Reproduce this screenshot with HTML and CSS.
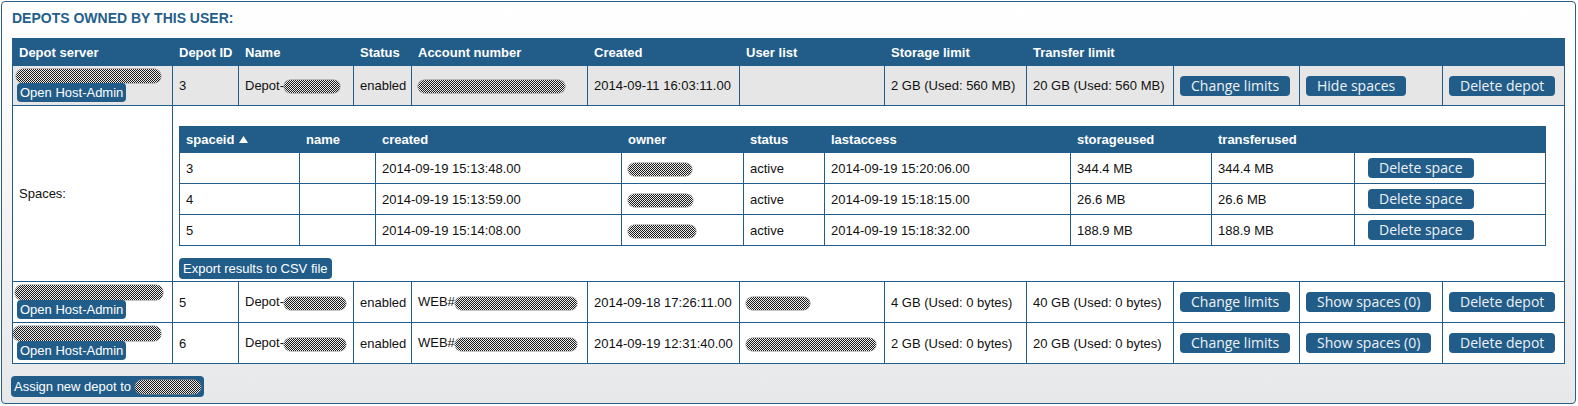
FILE: index.html
```html
<!DOCTYPE html>
<html>
<head>
<meta charset="utf-8">
<title>Depots</title>
<link rel="stylesheet" href="styles.css">
</head>
<body>
<div class="panel">
  <h2 class="title">DEPOTS OWNED BY THIS USER:</h2>
  <table class="depots">
    <colgroup>
      <col class="c-srv"><col class="c-id"><col class="c-name"><col class="c-status"><col class="c-acc"><col class="c-created"><col class="c-users"><col class="c-stor"><col class="c-trans"><col class="c-b1"><col class="c-b2"><col class="c-b3">
    </colgroup>
    <thead>
      <tr><th>Depot server</th><th>Depot ID</th><th>Name</th><th>Status</th><th>Account number</th><th>Created</th><th>User list</th><th>Storage limit</th><th>Transfer limit</th><th></th><th></th><th></th></tr>
    </thead>
    <tbody>
      <tr class="hl">
        <td class="srv"><span class="blob blob-srv w145"></span><span class="lbtn host">Open Host-Admin</span></td>
        <td>3</td>
        <td>Depot-<span class="blob w56"></span></td>
        <td>enabled</td>
        <td><span class="blob w147"></span></td>
        <td>2014-09-11 16:03:11.00</td>
        <td></td>
        <td>2 GB (Used: 560 MB)</td>
        <td>20 GB (Used: 560 MB)</td>
        <td><span class="btn">Change limits</span></td>
        <td><span class="btn">Hide spaces</span></td>
        <td><span class="btn">Delete depot</span></td>
      </tr>
      <tr class="spaces-row">
        <td class="spaces-label">Spaces:</td>
        <td colspan="11" class="spaces-cell">
          <table class="spaces">
            <colgroup>
              <col class="s-id"><col class="s-name"><col class="s-created"><col class="s-owner"><col class="s-status"><col class="s-last"><col class="s-stor"><col class="s-trans"><col class="s-btn">
            </colgroup>
            <thead>
              <tr><th>spaceid <svg class="sort" width="9" height="7" viewBox="0 0 9 7"><polygon points="4.5,0 9,7 0,7" fill="#ffffff"/></svg></th><th>name</th><th>created</th><th>owner</th><th>status</th><th>lastaccess</th><th>storageused</th><th>transferused</th><th></th></tr>
            </thead>
            <tbody>
              <tr><td>3</td><td></td><td>2014-09-19 15:13:48.00</td><td><span class="blob w64"></span></td><td>active</td><td>2014-09-19 15:20:06.00</td><td>344.4 MB</td><td>344.4 MB</td><td><span class="btn del-space">Delete space</span></td></tr>
              <tr><td>4</td><td></td><td>2014-09-19 15:13:59.00</td><td><span class="blob w65"></span></td><td>active</td><td>2014-09-19 15:18:15.00</td><td>26.6 MB</td><td>26.6 MB</td><td><span class="btn del-space">Delete space</span></td></tr>
              <tr><td>5</td><td></td><td>2014-09-19 15:14:08.00</td><td><span class="blob w68"></span></td><td>active</td><td>2014-09-19 15:18:32.00</td><td>188.9 MB</td><td>188.9 MB</td><td><span class="btn del-space">Delete space</span></td></tr>
            </tbody>
          </table>
          <span class="lbtn export">Export results to CSV file</span>
        </td>
      </tr>
      <tr>
        <td class="srv"><span class="blob blob-srv tall w148"></span><span class="lbtn host">Open Host-Admin</span></td>
        <td>5</td>
        <td>Depot-<span class="blob w62"></span></td>
        <td>enabled</td>
        <td>WEB#<span class="blob w122"></span></td>
        <td>2014-09-18 17:26:11.00</td>
        <td><span class="blob w64"></span></td>
        <td>4 GB (Used: 0 bytes)</td>
        <td>40 GB (Used: 0 bytes)</td>
        <td><span class="btn">Change limits</span></td>
        <td><span class="btn">Show spaces (0)</span></td>
        <td><span class="btn">Delete depot</span></td>
      </tr>
      <tr>
        <td class="srv"><span class="blob blob-srv tall w148 shift"></span><span class="lbtn host">Open Host-Admin</span></td>
        <td>6</td>
        <td>Depot-<span class="blob w62"></span></td>
        <td>enabled</td>
        <td>WEB#<span class="blob w122"></span></td>
        <td>2014-09-19 12:31:40.00</td>
        <td><span class="blob w130"></span></td>
        <td>2 GB (Used: 0 bytes)</td>
        <td>20 GB (Used: 0 bytes)</td>
        <td><span class="btn">Change limits</span></td>
        <td><span class="btn">Show spaces (0)</span></td>
        <td><span class="btn">Delete depot</span></td>
      </tr>
    </tbody>
  </table>
  <span class="lbtn assign">Assign new depot to <span class="blob w66"></span></span>
</div>
</body>
</html>
```
FILE: styles.css
```css
html, body {
  margin: 0;
  padding: 0;
  background: #ffffff;
}

body {
  font-family: "Liberation Sans", Arial, sans-serif;
  font-size: 13px;
  color: #111111;
}

.panel {
  margin: 1px 2px 2px 1px;
  border: 1px solid #2a5f8a;
  border-radius: 4px;
  padding: 0 10px 6px 10px;
  background: linear-gradient(to bottom, #ffffff 0%, #f6f6f7 45%, #e7e8ea 100%);
}

.title {
  margin: 0;
  padding: 8px 0 12px 0;
  font-size: 14px;
  line-height: 16px;
  font-weight: bold;
  color: #245e8b;
}

table {
  border-collapse: collapse;
  table-layout: fixed;
}

.depots {
  width: 100%;
  border: 1px solid #225d8a;
}

.depots th,
.spaces th {
  background: #225d8a;
  color: #ffffff;
  font-weight: bold;
  text-align: left;
  line-height: 15px;
  border: 1px solid #225d8a;
  white-space: nowrap;
}

.depots th {
  padding: 6px 6px 5px 6px;
}

.depots td {
  border: 1px solid #225d8a;
  padding: 0 6px;
  line-height: 15px;
  vertical-align: middle;
  background: #ffffff;
  white-space: nowrap;
  overflow: hidden;
}

.depots tr.hl > td {
  background: #e6e6e6;
}

.c-srv { width: 160px; }
.c-id { width: 66px; }
.c-name { width: 115px; }
.c-status { width: 58px; }
.c-acc { width: 176px; }
.c-created { width: 152px; }
.c-users { width: 145px; }
.c-stor { width: 142px; }
.c-trans { width: 147px; }
.c-b1 { width: 126px; }
.c-b2 { width: 143px; }
.c-b3 { width: 122px; }

.depots td.srv {
  padding: 3px 2px 3px 2px;
}

.blob {
  display: inline-block;
  height: 13px;
  border-radius: 7px;
  vertical-align: middle;
  background: repeating-conic-gradient(#1a1a1a 0 25%, #ececec 0 50%) 0 0 / 2px 2px;
  box-shadow: 0 0 0 0.5px #8a8a8a;
}

.blob-srv {
  display: block;
  height: 14px;
  margin-left: 1px;
}

.blob-srv.tall {
  height: 15px;
  margin-left: 0;
}

.blob-srv.shift {
  margin-left: -2px;
}

.w56 { width: 56px; }
.w62 { width: 62px; }
.w64 { width: 64px; }
.w65 { width: 65px; }
.w66 { width: 66px; }
.w68 { width: 68px; }
.w122 { width: 122px; }
.w130 { width: 130px; }
.w145 { width: 145px; }
.w147 { width: 147px; }
.w148 { width: 148px; }

.lbtn {
  display: block;
  width: max-content;
  background: #225d8a;
  color: #ffffff;
  border-radius: 4px;
  padding: 0 3px;
  font-family: "Liberation Sans", Arial, sans-serif;
}

.lbtn.host {
  height: 19px;
  line-height: 19px;
  font-size: 13px;
  padding: 0 3px;
  margin-left: 2px;
}

.lbtn.export {
  height: 21px;
  line-height: 21px;
  font-size: 13px;
  padding: 0 4px;
  margin-top: 12px;
}

.lbtn.assign {
  height: 21px;
  line-height: 21px;
  font-size: 13px;
  margin-top: 12px;
  margin-left: -1px;
}

.lbtn .blob {
  height: 14px;
  margin-top: -2px;
}

.btn {
  display: inline-block;
  height: 20px;
  line-height: 20px;
  padding: 0 11px;
  border-radius: 4px;
  background: #225d8a;
  color: #eef3f7;
  font-family: "Open Sans", "DejaVu Sans", sans-serif;
  font-size: 14px;
  vertical-align: middle;
  white-space: nowrap;
}

.depots td.spaces-label {
  padding: 0 6px;
}

.depots td.spaces-cell {
  padding: 20px 6px 2px 6px;
  vertical-align: top;
}

.spaces {
  width: 1366px;
  border: 1px solid #225d8a;
}

.spaces th {
  padding: 5px 6px;
}

.spaces td {
  border: 1px solid #225d8a;
  padding: 5px 6px;
  line-height: 15px;
  height: 20px;
  vertical-align: middle;
  background: #ffffff;
  white-space: nowrap;
}

.s-id { width: 120px; }
.s-name { width: 76px; }
.s-created { width: 246px; }
.s-owner { width: 122px; }
.s-status { width: 81px; }
.s-last { width: 246px; }
.s-stor { width: 141px; }
.s-trans { width: 143px; }
.s-btn { width: 191px; }

.sort {
  display: inline-block;
  vertical-align: 1px;
  margin-left: 1px;
}

.del-space {
  margin-left: 7px;
}
```
